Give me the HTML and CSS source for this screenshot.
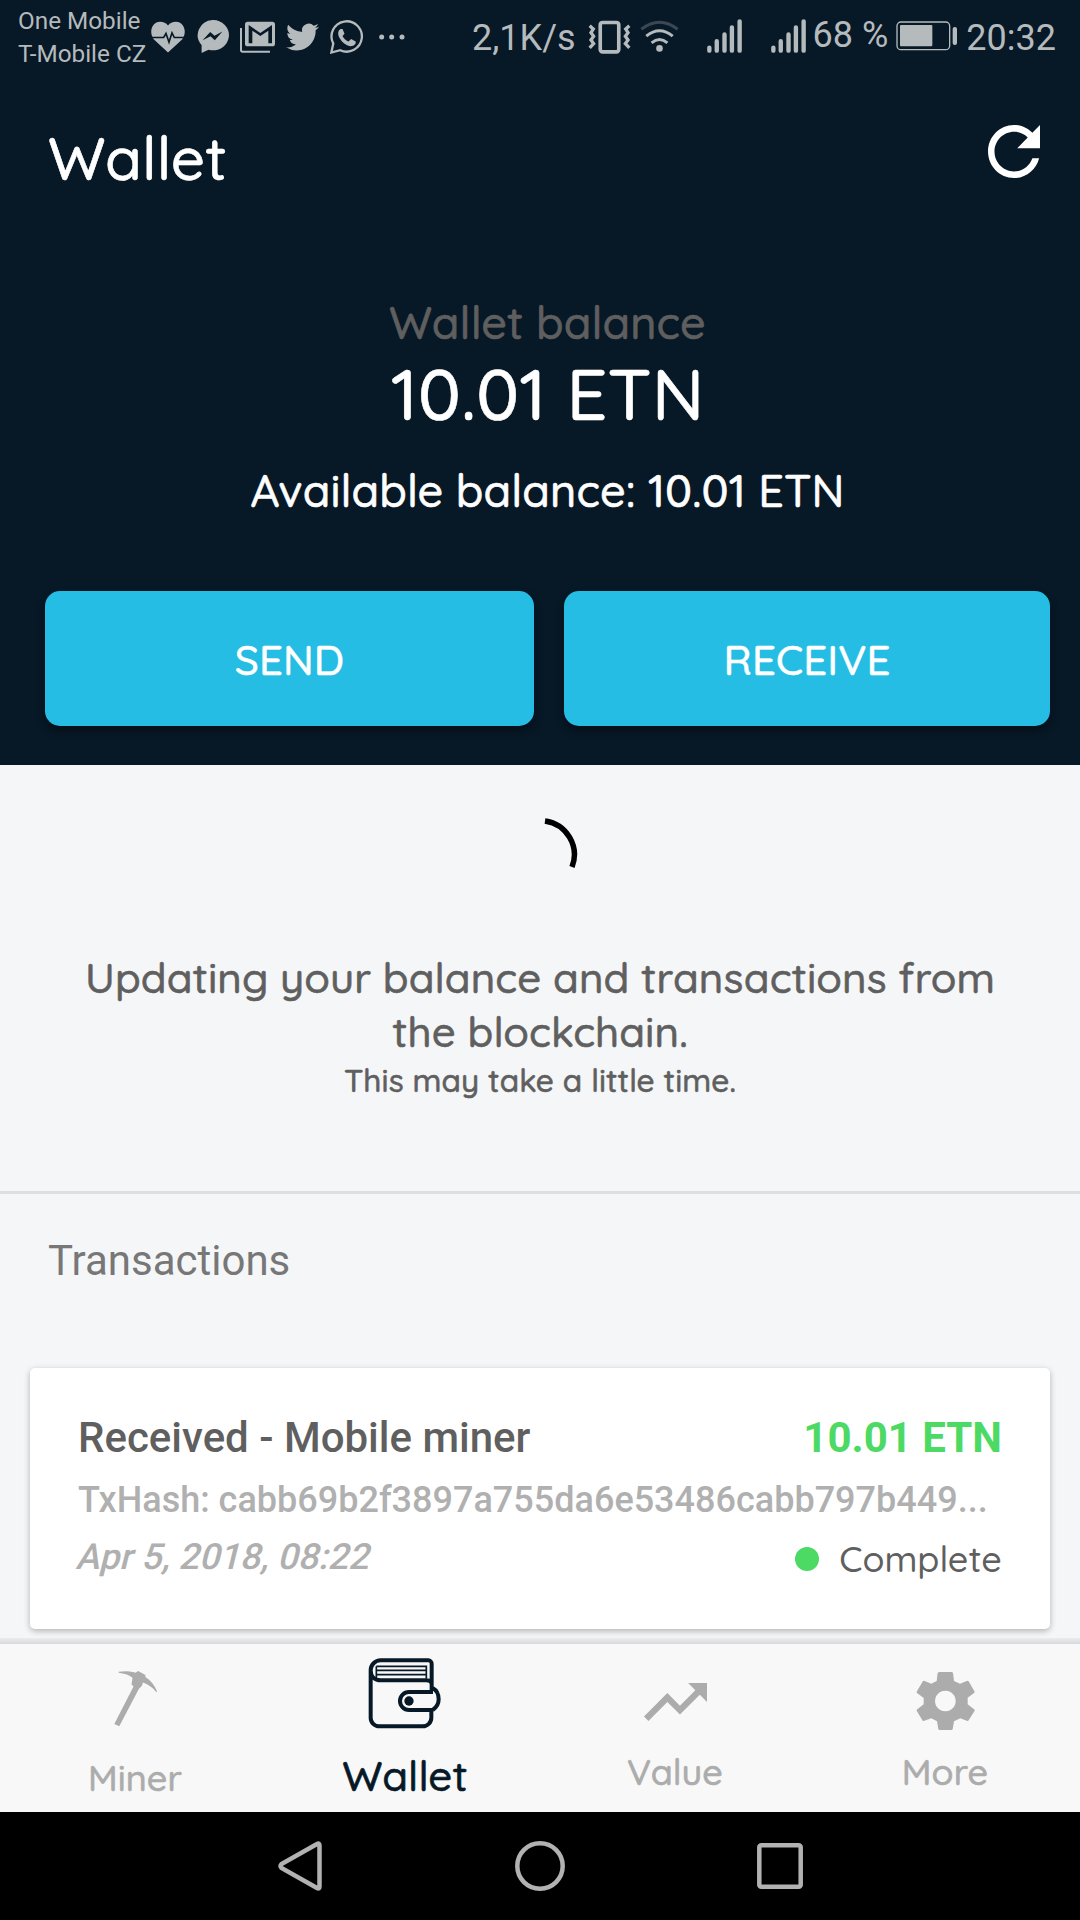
FILE: index.html
```html
<!DOCTYPE html>
<html lang="en">
<head>
    <meta charset="UTF-8">
    <meta name="viewport" content="width=device-width, initial-scale=1.0">
    <title>Wallet</title>
    <link rel="stylesheet" href="styles.css">
</head>
<body>
    <div class="hero">
        <div class="status-bar">
            <div class="carrier">One Mobile<br>T-Mobile CZ</div>
            <div class="notifications">
                <svg width="34" height="32" viewBox="32 32 102 95">
                    <path class="fill" d="M83 126L40 86C24 64 36 34 59 34c11 0 18 4 24 11 6-7 13-11 24-11 23 0 35 30 19 52z"/>
                    <path class="cut" stroke-width="5" d="M30 81h40l7-12 9 26 9-28 7 14h34"/>
                </svg>
                <svg width="33" height="33" viewBox="168 32 98 100">
                    <path class="fill" d="M217 32a48 46 0 1 1-12 90l-21 10v-24a48 46 0 0 1 33-76z"/>
                    <path class="hole" d="M187 93l23-25 13 12 24-13-23 26-13-12z"/>
                </svg>
                <svg width="35" height="32" viewBox="300 32 105 94">
                    <path class="line" stroke-width="6" d="M303 52v66q0 5 5 5h82"/>
                    <rect class="fill" x="315" y="33" width="90" height="74" rx="8"/>
                    <path class="hole" d="M326 98V43l35 24 35-24v55h-11V60l-24 16-24-16v38z"/>
                </svg>
                <svg width="33" height="28" viewBox="0 2 24 20">
                    <path class="fill" d="M23.953 4.57a10 10 0 01-2.825.775 4.958 4.958 0 002.163-2.723c-.951.555-2.005.959-3.127 1.184a4.92 4.92 0 00-8.384 4.482C7.69 8.095 4.067 6.13 1.64 3.162a4.822 4.822 0 00-.666 2.475c0 1.71.87 3.213 2.188 4.096a4.904 4.904 0 01-2.228-.616v.06a4.923 4.923 0 003.946 4.827 4.996 4.996 0 01-2.212.085 4.936 4.936 0 004.604 3.417 9.867 9.867 0 01-6.102 2.105c-.39 0-.779-.023-1.17-.067a13.995 13.995 0 007.557 2.209c9.053 0 13.998-7.496 13.998-13.985 0-.21 0-.42-.015-.63A9.935 9.935 0 0024 4.59z"/>
                </svg>
                <svg width="33" height="34" viewBox="572 29 100 102">
                    <path class="line" stroke-width="7" d="M582 100l-6 27 27-7a46 46 0 1 0-21-20z"/>
                    <path class="fill" d="M604 56c-9 5-9 17-3 27 8 14 19 23 32 25 10 1 18-5 17-14l-14-8-8 8c-9-4-14-9-18-17l6-7-6-14z"/>
                </svg>
                <svg class="dots" width="26" height="6" viewBox="719 69 78 18">
                    <circle class="fill" cx="727" cy="78" r="7.5"/>
                    <circle class="fill" cx="757" cy="78" r="7.5"/>
                    <circle class="fill" cx="788" cy="78" r="7.5"/>
                </svg>
            </div>
            <div class="system">
                <span class="speed">2,1K/s</span>
                <svg class="vibrate" width="43" height="34" viewBox="22 28 130 102">
                    <rect class="line" stroke-width="11" x="59" y="35" width="56" height="89" rx="7"/>
                    <path class="line" stroke-width="10" d="M27 45l11 10-7 11 8 11-8 11 8 11-12 13M147 45l-11 10 7 11-8 11 8 11-8 11 12 13"/>
                </svg>
                <svg class="wifi" width="39" height="33" viewBox="179 26 118 98">
                    <circle class="fill" cx="238" cy="114" r="10"/>
                    <path class="line" stroke-width="9" d="M214 97q24-20 48 0M198 77q40-33 80 0"/>
                    <path class="line weak" stroke-width="9" d="M183 56q55-42 110 0"/>
                </svg>
                <svg class="signal" width="35" height="34" viewBox="380 26 104 101">
                    <path class="line bars" d="M387 111v9M409 92v28M432 72v48M454 51v69M477 33v87"/>
                </svg>
                <svg class="signal-2" width="35" height="34" viewBox="380 26 104 101">
                    <path class="line bars" d="M387 111v9M409 92v28M432 72v48M454 51v69M477 33v87"/>
                </svg>
                <span class="percent">68 %</span>
                <svg class="battery" width="62" height="30" viewBox="947 32 186 90">
                    <rect class="line" stroke-width="4" x="950" y="35" width="158" height="83" rx="12"/>
                    <rect class="fill" x="959" y="44" width="97" height="64" rx="3"/>
                    <rect class="fill" x="1117" y="50" width="13" height="54" rx="6"/>
                </svg>
                <span class="clock">20:32</span>
            </div>
        </div>

        <div class="header">
            <h1>Wallet</h1>
            <svg class="refresh" width="52" height="53" viewBox="4 4 16 16" preserveAspectRatio="none">
                <path d="M17.65 6.35C16.2 4.9 14.21 4 12 4c-4.42 0-7.99 3.58-7.99 8s3.57 8 7.99 8c3.73 0 6.84-2.55 7.73-6h-2.08c-.82 2.33-3.04 4-5.65 4-3.31 0-6-2.69-6-6s2.69-6 6-6c1.66 0 3.14.69 4.22 1.78L13 11h7V4l-2.35 2.35z"/>
            </svg>
        </div>

        <div class="balance">
            <div class="balance-label">Wallet balance</div>
            <div class="balance-amount">10.01 ETN</div>
            <div class="balance-available">Available balance: 10.01 ETN</div>
        </div>

        <div class="actions">
            <button class="btn">SEND</button>
            <button class="btn">RECEIVE</button>
        </div>
    </div>

    <div class="updating">
        <svg class="spinner" width="76" height="76" viewBox="0 0 76 76">
            <path d="M43 5A34 34 0 0 1 70 51"/>
        </svg>
        <p class="updating-text">Updating your balance and transactions from the blockchain.</p>
        <p class="updating-note">This may take a little time.</p>
    </div>

    <div class="transactions">
        <h2>Transactions</h2>
        <div class="card">
            <div class="row">
                <span class="title">Received - Mobile miner</span>
                <span class="amount">10.01 ETN</span>
            </div>
            <div class="hash">TxHash: cabb69b2f3897a755da6e53486cabb797b449...</div>
            <div class="row">
                <span class="date">Apr 5, 2018, 08:22</span>
                <span class="status">Complete</span>
            </div>
        </div>
    </div>

    <div class="tab-bar">
        <div class="tab tab-miner">
            <svg width="45" height="57" viewBox="100 90 136 170">
                <path d="M117 94c18-3 37-2 51 3l8-5 22 12v6c16 10 28 26 35 43l-2 3c-12-14-25-24-41-29l-2 9-10 10-59 113-15-7 58-113-6-6 3-21c-12-9-26-13-42-15z"/>
            </svg>
            <span>Miner</span>
        </div>
        <div class="tab tab-wallet active">
            <svg width="74" height="72" viewBox="865 50 222 216">
                <g fill="none" stroke="#071826">
                    <path stroke-width="12" d="M873 88v144a26 26 0 0 0 26 26h130a26 26 0 0 0 26-26v-22M1056 152V70a10 10 0 0 0-10-10H903a30 30 0 0 0-30 30c0 18 12 30 30 30h137q16 0 16 12"/>
                    <path stroke-width="5" d="M890 78h150v37M890 78v37M890 90h150M890 103h150"/>
                    <path stroke-width="12" d="M1060 155h-72a27 27 0 0 0 0 54h72M1059 143q18 10 18 34 0 20-18 32"/>
                </g>
                <circle cx="988" cy="182" r="14"/>
            </svg>
            <span>Wallet</span>
        </div>
        <div class="tab tab-value">
            <svg width="63" height="38" viewBox="2 6 20 12">
                <path d="M16 6l2.29 2.29-4.88 4.88-4-4L2 16.59 3.41 18l6-6 4 4 6.3-6.29L22 12V6z"/>
            </svg>
            <span>Value</span>
        </div>
        <div class="tab tab-more">
            <svg width="59" height="58" viewBox="947 96 177 174">
                <path fill-rule="evenodd" d="M1016 96h38q3 0 4 3l3 24 18 8 22-9q3 0 4 2l18 31-1 3-20 15v20l21 16v3l-19 30-3 1-21-8-19 9-4 24-3 2h-37l-3-2-4-24-17-9-23 8-3-1-18-30v-3l21-16v-19l-21-16v-3l19-32 3-1 22 9 16-8 3-24zM1035 152a31 31 0 1 0 .1 0z"/>
            </svg>
            <span>More</span>
        </div>
    </div>

    <div class="nav-bar">
        <svg width="44" height="50" viewBox="0 0 44 50"><path d="M39 3q2.5-1.5 2.5 1.5v41q0 3-2.5 1.5L3.5 27q-2-2 0-4z"/></svg>
        <svg width="50" height="50" viewBox="0 0 50 50"><circle cx="25" cy="25" r="22.7"/></svg>
        <svg width="46" height="46" viewBox="0 0 46 46"><rect x="2.3" y="2.3" width="41.4" height="41.4" rx="2"/></svg>
    </div>
</body>
</html>
```

FILE: styles.css
```css
* {
    box-sizing: border-box;
    margin: 0;
    padding: 0;
}

body {
    width: 1080px;
    height: 1920px;
    display: flex;
    flex-direction: column;
    overflow: hidden;
    background: #f5f6f8;
    color: #5f5f5f;
    font-family: Quicksand, Lato, sans-serif;
    font-weight: 500;
}

svg {
    display: block;
    flex: none;
}

/* slightly heavier than medium */
.header,
.balance,
.btn,
.updating,
.tab {
    letter-spacing: 0.1px;
    -webkit-text-stroke: 0.6px currentColor;
}

/* dark top part */
.hero {
    height: 765px;
    background: #071826;
    color: #fff;
}

.status-bar {
    height: 73px;
    padding: 0 24px 0 18px;
    display: flex;
    align-items: center;
    color: #b5babd;
    font-family: Roboto, sans-serif;
    font-weight: 400;
    font-size: 36px;
    white-space: nowrap;
}

.status-bar .fill {
    fill: #b5babd;
}

.status-bar .hole {
    fill: #071826;
}

.status-bar .line {
    fill: none;
    stroke: #b5babd;
}

.status-bar .cut {
    fill: none;
    stroke: #071826;
}

.status-bar .weak {
    opacity: 0.3;
}

.status-bar .bars {
    stroke-width: 13px;
    stroke-linecap: round;
}

.carrier {
    width: 133px;
    padding-top: 1px;
    font-size: 24.3px;
    line-height: 33px;
}

.notifications {
    display: flex;
    align-items: center;
    gap: 11px;
}

.dots {
    margin-left: 5px;
}

.system {
    margin-left: auto;
    display: flex;
    align-items: center;
}

.speed,
.clock {
    padding-top: 3px;
}

.percent {
    padding-bottom: 3px;
    margin-left: 7px;
}

.vibrate {
    margin-left: 12px;
}

.wifi {
    margin: 0 0 3px 9px;
}

.signal {
    margin: 0 0 2px 28px;
}

.signal-2 {
    margin: 0 0 2px 29px;
}

.battery {
    margin: 0 0 2px 8px;
}

.clock {
    margin-left: 8px;
}

.header {
    padding: 49px 40px 0 48px;
    display: flex;
    justify-content: space-between;
}

.header h1 {
    font-size: 60px;
    font-weight: 500;
    line-height: 72px;
}

.refresh {
    margin-top: 3px;
    fill: #fff;
}

.balance {
    margin-top: 101px;
    padding: 0 30px 0 45px;
    text-align: center;
}

.balance-label {
    color: #5f5f5f;
    font-size: 45px;
    line-height: 54px;
}

.balance-amount {
    font-size: 72px;
    line-height: 88px;
}

.balance-available {
    margin-top: 26px;
    font-size: 45px;
    line-height: 54px;
}

.actions {
    margin-top: 74px;
    padding: 0 30px 0 45px;
    display: grid;
    grid-template-columns: 489px 486px;
    gap: 30px;
}

.btn {
    height: 135px;
    padding-top: 2px;
    border: none;
    border-radius: 15px;
    background: #25bde3;
    box-shadow: 0 5px 8px rgba(0, 0, 0, 0.35);
    color: #fff;
    font: 500 42px Quicksand, Lato, sans-serif;
}

/* loading message */
.updating {
    height: 429px;
    padding-top: 51px;
    border-bottom: 3px solid #dedede;
    text-align: center;
}

.spinner {
    margin: 0 auto;
    fill: none;
    stroke: #000;
    stroke-width: 5.5px;
}

.updating-text {
    margin: 59px auto 0;
    width: 960px;
    font-size: 42px;
    line-height: 54px;
}

.updating-note {
    font-size: 31.6px;
    line-height: 42px;
}

.transactions {
    height: 444px;
    padding: 42px 30px 0;
    font-family: Roboto, sans-serif;
}

.transactions h2 {
    padding-left: 18px;
    color: #777;
    font-size: 42px;
    font-weight: 400;
    line-height: 50px;
}

.card {
    height: 261px;
    margin-top: 82px;
    padding: 45px 48px 0;
    border-radius: 5px;
    background: #fff;
    box-shadow: 0 2px 6px rgba(0, 0, 0, 0.28);
}

.row {
    display: flex;
    justify-content: space-between;
}

.title,
.amount {
    font-size: 42px;
    line-height: 50px;
}

.amount {
    color: #4cd964;
    font-weight: 700;
}

.hash {
    margin: 13px 0 9px;
    color: #b0b0b0;
    font-size: 36px;
    line-height: 48px;
    white-space: nowrap;
}

.date {
    color: #b0b0b0;
    font-size: 36px;
    line-height: 48px;
    transform: skewX(-14deg);
}

.status {
    padding-top: 2px;
    display: flex;
    align-items: center;
    gap: 20px;
    font-family: Quicksand, Lato, sans-serif;
    font-size: 36px;
    line-height: 48px;
}

.status::before {
    content: "";
    width: 24px;
    height: 24px;
    border-radius: 50%;
    background: #4cd964;
}

/* bottom tabs */
.tab-bar {
    height: 174px;
    padding-top: 6px;
    display: grid;
    grid-template-columns: repeat(4, 1fr);
    background: linear-gradient(#ebecee, #d6d8db 6px, #f8f8f8 6px);
}

.tab {
    display: flex;
    flex-direction: column;
    align-items: center;
    color: #acacac;
    fill: #acacac;
    font-size: 36px;
    line-height: 48px;
}

.tab-miner {
    padding-top: 26px;
    gap: 27px;
}

.tab-wallet {
    padding-top: 13px;
    gap: 23px;
}

.tab-value {
    padding-top: 39px;
    gap: 27px;
}

.tab-more {
    padding-top: 28px;
    gap: 18px;
}

.tab.active {
    color: #071826;
    fill: #071826;
    font-size: 42px;
}

.nav-bar {
    height: 108px;
    padding: 0 180px;
    display: grid;
    grid-template-columns: repeat(3, 1fr);
    place-items: center;
    background: #000;
}

.nav-bar svg {
    fill: none;
    stroke: #b2b2b2;
    stroke-width: 4.5px;
}
```
